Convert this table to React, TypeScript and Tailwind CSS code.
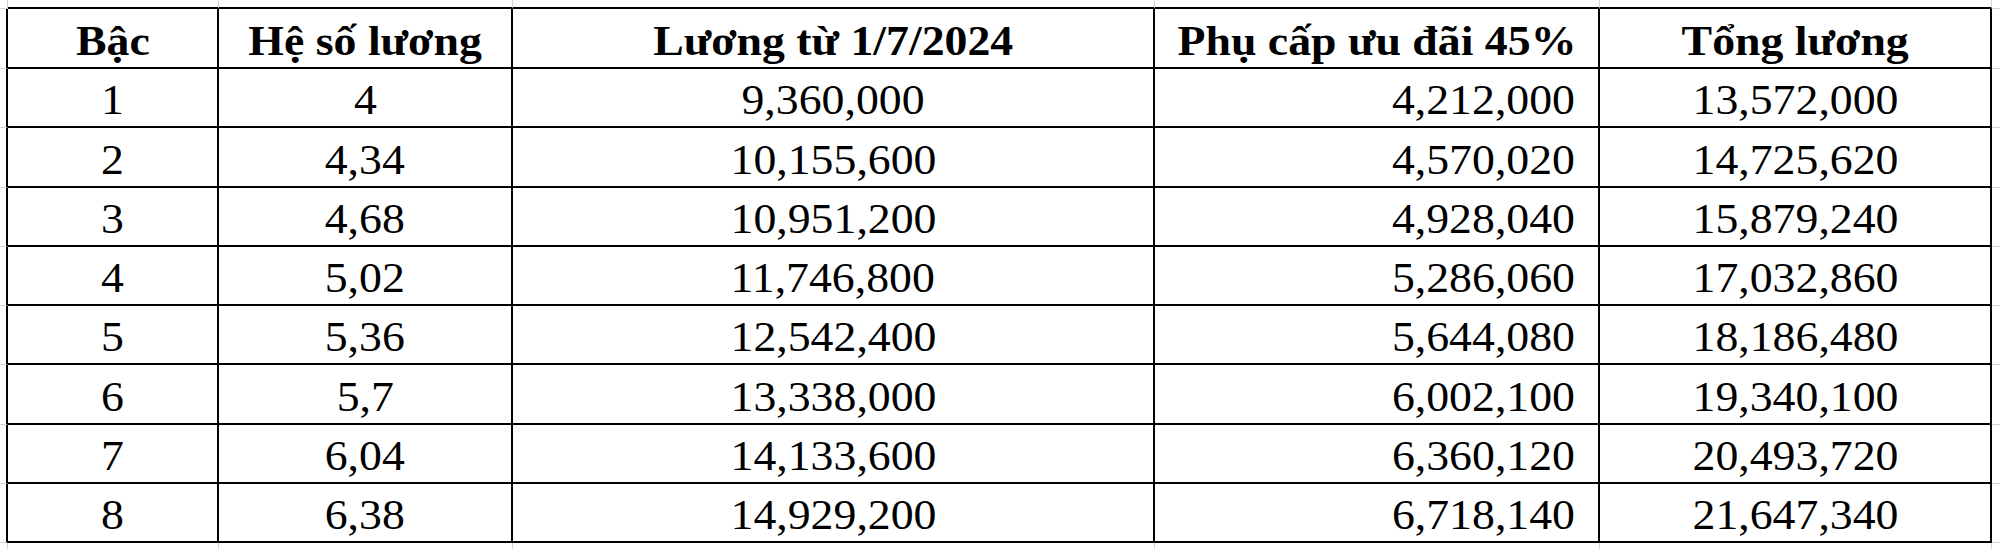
import React from "react";
import clsx from "clsx";

type Row = [string, string, string, string, string];

const rows: Row[] = [
  ["1", "4", "9,360,000", "4,212,000", "13,572,000"],
  ["2", "4,34", "10,155,600", "4,570,020", "14,725,620"],
  ["3", "4,68", "10,951,200", "4,928,040", "15,879,240"],
  ["4", "5,02", "11,746,800", "5,286,060", "17,032,860"],
  ["5", "5,36", "12,542,400", "5,644,080", "18,186,480"],
  ["6", "5,7", "13,338,000", "6,002,100", "19,340,100"],
  ["7", "6,04", "14,133,600", "6,360,120", "20,493,720"],
  ["8", "6,38", "14,929,200", "6,718,140", "21,647,340"],
];

const headers = ["Bậc", "Hệ số lương", "Lương từ 1/7/2024", "Phụ cấp ưu đãi 45%", "Tổng lương"];

function Cell({ children, right, bold }: { children: React.ReactNode; right?: boolean; bold?: boolean }) {
  return (
    <div
      className={clsx(
        "flex items-end pb-[5px] border-r-2 border-b-2 border-black overflow-hidden",
        right ? "justify-end pr-[23px]" : "justify-center"
      )}
    >
      <span
        className={clsx(
          "inline-block leading-none whitespace-nowrap scale-x-[1.09]",
          right ? "origin-right" : "origin-center",
          bold && "font-bold"
        )}
      >
        {children}
      </span>
    </div>
  );
}

// pale sheet gridlines around the table
function LeftEdge() {
  return <div className="border-r-2 border-r-black border-b border-b-[#d4d4d4]" />;
}

function RightEdge() {
  return <div className="border-b border-b-[#d4d4d4]" />;
}

export default function App() {
  return (
    <div className="w-[2000px] h-[549px] bg-white text-black [font-family:'Liberation_Serif',serif] text-[42px] grid grid-cols-[8px_211px_294px_642px_445px_392px_1fr] grid-rows-[9px_60px_repeat(8,59.25px)_1fr] overflow-hidden">
      {/* top strip */}
      <div className="border-r border-b border-[#d4d4d4]" />
      {headers.map((h) => (
        <div key={h} className="border-r border-r-[#d4d4d4] border-b-2 border-b-black" />
      ))}
      <div className="border-b border-b-[#d4d4d4]" />

      {/* header */}
      <LeftEdge />
      {headers.map((h) => (
        <Cell key={h} bold>
          {h}
        </Cell>
      ))}
      <RightEdge />

      {rows.map((r) => (
        <React.Fragment key={r[0]}>
          <LeftEdge />
          <Cell>{r[0]}</Cell>
          <Cell>{r[1]}</Cell>
          <Cell>{r[2]}</Cell>
          <Cell right>{r[3]}</Cell>
          <Cell>{r[4]}</Cell>
          <RightEdge />
        </React.Fragment>
      ))}

      {/* bottom strip */}
      <div className="border-r border-r-[#d4d4d4]" />
      {headers.map((h) => (
        <div key={h} className="border-r border-r-[#d4d4d4]" />
      ))}
      <div />
    </div>
  );
}
